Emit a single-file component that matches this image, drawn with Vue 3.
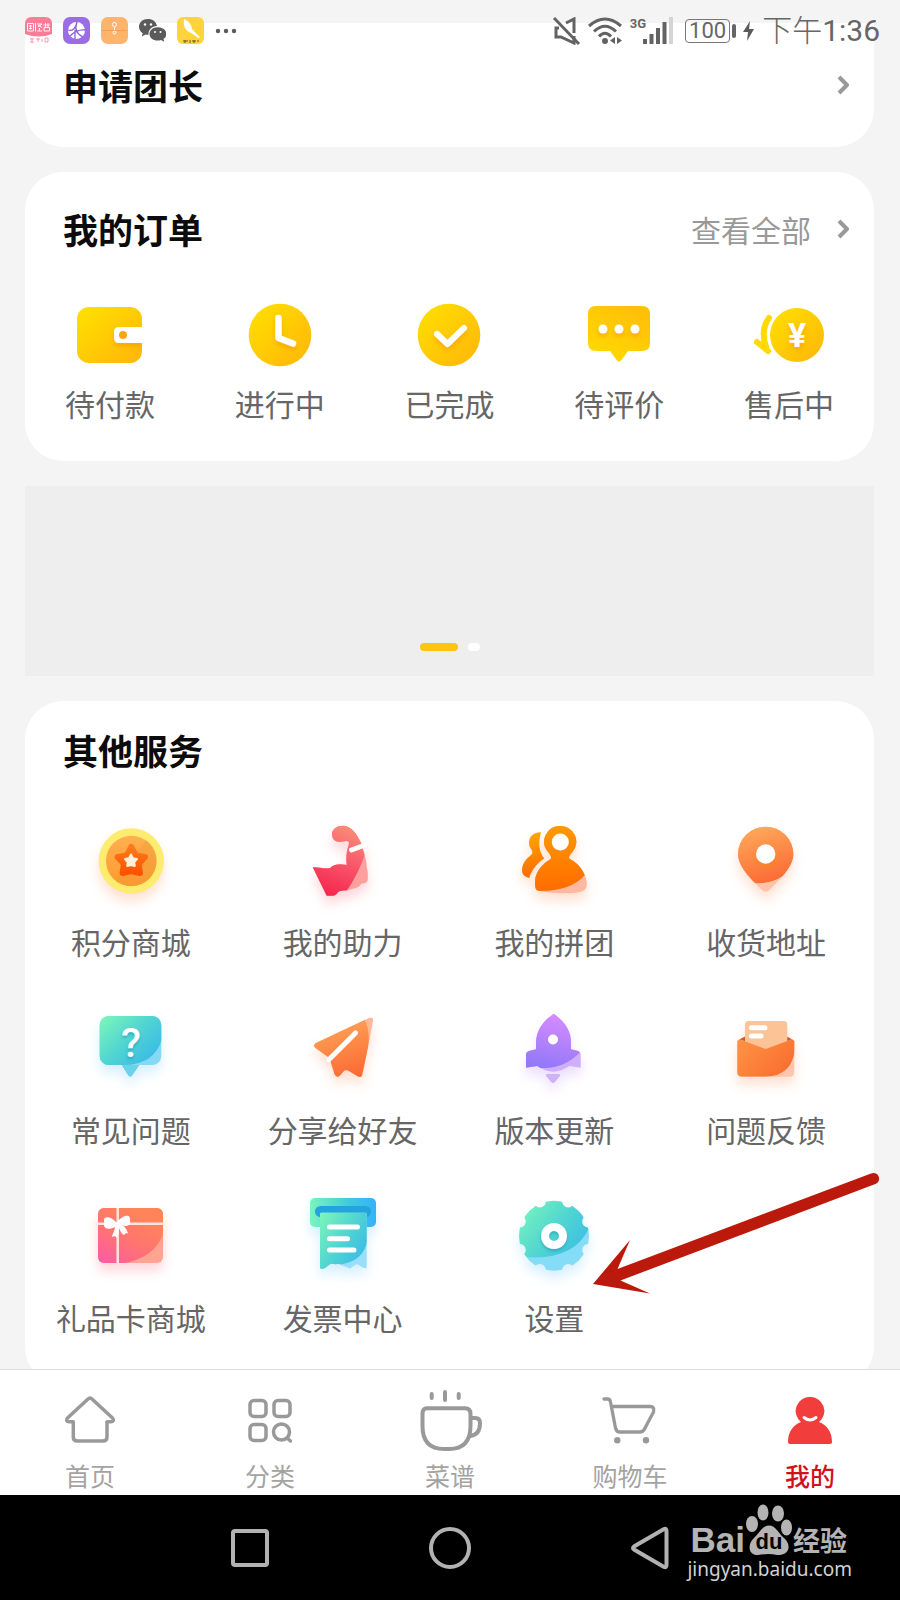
<script setup>
import { ref } from "vue"

const orders = [
  { icon: "wallet", label: "待付款" },
  { icon: "clock", label: "进行中" },
  { icon: "check", label: "已完成" },
  { icon: "comment", label: "待评价" },
  { icon: "refund", label: "售后中", glyph: "¥" },
]

const services = [
  { icon: "coin", label: "积分商城", tone: "peach" },
  { icon: "muscle", label: "我的助力", tone: "pink" },
  { icon: "group", label: "我的拼团", tone: "peach" },
  { icon: "pin", label: "收货地址", tone: "peach" },
  { icon: "question", label: "常见问题", tone: "sky", glyph: "?" },
  { icon: "plane", label: "分享给好友", tone: "peach" },
  { icon: "rocket", label: "版本更新", tone: "violet" },
  { icon: "feedback", label: "问题反馈", tone: "peach" },
  { icon: "gift", label: "礼品卡商城", tone: "pink" },
  { icon: "invoice", label: "发票中心", tone: "sky" },
  { icon: "gear", label: "设置", tone: "sky" },
]

const tabs = [
  { icon: "home", label: "首页" },
  { icon: "category", label: "分类" },
  { icon: "cup", label: "菜谱" },
  { icon: "cart", label: "购物车" },
  { icon: "me", label: "我的" },
]

const slides = ref([0, 1])
const activeSlide = ref(0)
const activeTab = ref("me")
</script>

<template>
  <div class="phone">
    <!-- icon sprite -->
    <svg class="sprite" width="0" height="0" aria-hidden="true">
      <defs>
        <linearGradient id="g-yellow" x1="0" y1="0" x2="1" y2="1">
          <stop offset="0.1" stop-color="#ffdd00" />
          <stop offset="1" stop-color="#ffb50a" />
        </linearGradient>
        <linearGradient id="g-bubble" x1="0" y1="1" x2="0.7" y2="0">
          <stop offset="0" stop-color="#ffdc00" />
          <stop offset="1" stop-color="#ffc008" />
        </linearGradient>
        <linearGradient id="g-coin" x1="0" y1="0" x2="0" y2="1">
          <stop offset="0" stop-color="#ffb050" />
          <stop offset="1" stop-color="#ff9a2e" />
        </linearGradient>
        <linearGradient id="g-star" x1="0" y1="0" x2="0" y2="1">
          <stop offset="0" stop-color="#ff7a1c" />
          <stop offset="1" stop-color="#ff5200" />
        </linearGradient>
        <linearGradient id="g-arm" x1="0.65" y1="0.15" x2="0.35" y2="0.85">
          <stop offset="0" stop-color="#fb9478" />
          <stop offset="0.5" stop-color="#f9566a" />
          <stop offset="1" stop-color="#f4264e" />
        </linearGradient>
        <linearGradient id="g-people" x1="0.4" y1="0" x2="0.5" y2="1">
          <stop offset="0" stop-color="#ffa600" />
          <stop offset="1" stop-color="#ff6a00" />
        </linearGradient>
        <linearGradient id="g-orange" x1="0.3" y1="0" x2="0.6" y2="1">
          <stop offset="0" stop-color="#ffa95c" />
          <stop offset="1" stop-color="#fb6a32" />
        </linearGradient>
        <linearGradient id="g-envelope" x1="0" y1="0" x2="1" y2="0.6">
          <stop offset="0" stop-color="#ff9544" />
          <stop offset="1" stop-color="#f96f30" />
        </linearGradient>
        <linearGradient id="g-mint" x1="0" y1="0" x2="1" y2="0.8">
          <stop offset="0" stop-color="#7ef8ba" />
          <stop offset="0.5" stop-color="#52d6d0" />
          <stop offset="1" stop-color="#36b8e8" />
        </linearGradient>
        <linearGradient id="g-slot" x1="0" y1="0" x2="1" y2="0">
          <stop offset="0" stop-color="#7af5bd" />
          <stop offset="0.6" stop-color="#3fc9de" />
          <stop offset="1" stop-color="#35b2fb" />
        </linearGradient>
        <linearGradient id="g-rocket" x1="0.6" y1="0" x2="0.4" y2="1">
          <stop offset="0" stop-color="#d98cff" />
          <stop offset="1" stop-color="#9078f8" />
        </linearGradient>
        <linearGradient id="g-gift" x1="0.1" y1="1" x2="0.7" y2="0.1">
          <stop offset="0" stop-color="#ff5ba4" />
          <stop offset="0.5" stop-color="#ff7470" />
          <stop offset="1" stop-color="#ff8558" />
        </linearGradient>
        <clipPath id="c-arm">
          <path d="M39 23C39 18 44 14.700 50 14.700C58 14.700 64 23 68 32C71 42 74 50 73.700 56C75 60 75 64 74.700 69C74 72 71 73 68.700 72.300C67 76 63 77 59 78C55 80 50 79 46.500 80.300C44 81 44 84.700 40 84.700H33.700L19.700 56.300C25 55.500 30 58 37 57C40 54 45 52 53.700 54C53 48 53.500 44 53.700 42C54 38 56 35 56 31.500C54 28.500 51 31 47 31C42 31 39 28 39 23Z" />
        </clipPath>
        <clipPath id="c-body">
          <path d="M56 15A15.700 15.700 0 0 0 44 41C46 43.500 48.500 46.500 46 48.500C38 53 31 61 31 71C31 76 31 80 36 80C44 82 70 84 79 80C83 78 84 73 81.500 66C78 56 72 51 66 48C63.500 46.500 66.500 43 68.500 41A15.700 15.700 0 0 0 56 15Z" />
        </clipPath>
        <clipPath id="c-pin">
          <path d="M49.700 15.700A27.700 27.700 0 0 0 22 43.500C22 53 30 64 46 79Q49.700 82 53.400 79C69 64 77.400 53 77.400 43.500A27.700 27.700 0 0 0 49.700 15.700Z" />
        </clipPath>
        <clipPath id="c-question">
          <path d="M28 17H71A9 9 0 0 1 80.300 26V57A9 9 0 0 1 71 66H58.300L51.500 76Q49.300 79 47 76L40.700 66H28A9 9 0 0 1 18.700 57V26A9 9 0 0 1 28 17Z" />
        </clipPath>
        <clipPath id="c-plane">
          <path d="M76 19Q80.500 17 80 22L69.800 75Q69 79 65 77.500L55 71.500Q52.500 70 50 73L47 76.500Q43.500 79.500 41.500 75L36.500 59L22.500 49Q19.500 46 23 44Z" />
        </clipPath>
        <clipPath id="c-rocket">
          <path d="M47.500 16.500Q49.700 13.500 52 16.500C62 24 67 33 67 44V50.300L74 52Q76.700 53 76.700 55V68.700L65.300 67Q57 72.700 49.300 72.700Q41 72.700 33.300 67L22 68.700V55Q22 53 25 52L32 50.300V44C32 33 38 23 47.500 16.500Z" />
        </clipPath>
        <clipPath id="c-envelope">
          <path d="M21.300 42L23.500 40.300L49.700 50L76 40.300L78.300 42V73Q78.300 77.700 73.500 77.700H26Q21.300 77.700 21.300 73Z" />
        </clipPath>
        <clipPath id="c-gift">
          <rect x="17" y="21" width="65" height="55" rx="6" />
        </clipPath>
        <clipPath id="c-paper">
          <path d="M27 27Q27 25.700 28.500 25.700H72.200Q73.700 25.700 73.700 27V81Q71 82 66 78Q64 76.500 62 78L57 81.500L48 78Q46 76.500 42 77.500C38 75.500 36 78 33 80.500Q29 83 27 81Z" />
        </clipPath>
        <mask id="m-gear">
          <circle cx="50" cy="48.700" r="35" fill="#fff" />
          <g fill="#000">
            <circle cx="64.200" cy="14.500" r="6" />
            <circle cx="84.200" cy="34.500" r="6" />
            <circle cx="84.200" cy="62.900" r="6" />
            <circle cx="64.200" cy="82.900" r="6" />
            <circle cx="35.800" cy="82.900" r="6" />
            <circle cx="15.800" cy="62.900" r="6" />
            <circle cx="15.800" cy="34.500" r="6" />
            <circle cx="35.800" cy="14.500" r="6" />
          </g>
        </mask>
        <filter id="f-soft" x="-40%" y="-40%" width="180%" height="200%">
          <feDropShadow dx="0" dy="3" stdDeviation="2.500" flood-color="#f08a00" flood-opacity="0.5" />
        </filter>
        <filter id="f-blue" x="-40%" y="-40%" width="180%" height="200%">
          <feDropShadow dx="0" dy="2" stdDeviation="1.500" flood-color="#0a8aa8" flood-opacity="0.5" />
        </filter>
      </defs>

      <symbol id="i-wallet" viewBox="0 0 80 80">
        <rect x="7" y="12" width="65" height="56" rx="12" fill="url(#g-yellow)" />
        <g filter="url(#f-soft)">
          <path d="M72 32H49Q44 32 44 37V43Q44 48 49 48H72Z" fill="#fff" />
        </g>
        <path d="M72 28H80V60H72Z" fill="#fff" />
        <circle cx="53" cy="40" r="4" fill="#faa51a" />
      </symbol>
      <symbol id="i-clock" viewBox="0 0 80 80">
        <circle cx="40" cy="40" r="31.300" fill="url(#g-yellow)" />
        <path d="M38.500 23V43L53 48.500" fill="none" stroke="#fff" stroke-width="6.500" stroke-linecap="round" stroke-linejoin="round" filter="url(#f-soft)" />
      </symbol>
      <symbol id="i-check" viewBox="0 0 80 80">
        <circle cx="40" cy="40" r="31.300" fill="url(#g-yellow)" />
        <path d="M28 39L38.500 49L55 33" fill="none" stroke="#fff" stroke-width="6" stroke-linecap="round" stroke-linejoin="round" filter="url(#f-soft)" />
      </symbol>
      <symbol id="i-comment" viewBox="0 0 80 80">
        <path d="M17 11H63Q71 11 71 19V48Q71 56 63 56H49L42.500 65Q40 68 37.500 65L31 56H17Q9 56 9 48V19Q9 11 17 11Z" fill="url(#g-bubble)" />
        <g fill="#fff" filter="url(#f-soft)">
          <circle cx="24" cy="34" r="4.500" />
          <circle cx="40" cy="34" r="4.500" />
          <circle cx="56" cy="34" r="4.500" />
        </g>
      </symbol>
      <symbol id="i-refund" viewBox="0 0 80 80">
        <circle cx="48" cy="40" r="27" fill="url(#g-yellow)" />
        <path d="M20 23C14 31 13 40 17 52M8 47L19 56" fill="none" stroke="#ffda00" stroke-width="6" stroke-linecap="round" />
      </symbol>

      <symbol id="i-coin" viewBox="0 0 100 100">
        <circle cx="50.300" cy="50" r="32.700" fill="#fdec70" />
        <circle cx="50.300" cy="50" r="25.300" fill="url(#g-coin)" />
        <path d="M65 29A25.300 25.300 0 0 1 35 70Z" fill="#e99a3a" opacity="0.350" />
        <path d="M50.300 36L54.800 44.500L64 46L57.500 53L59 62L50.300 60L41.600 62L43 53L36.600 46L45.800 44.500Z" fill="url(#g-star)" stroke="url(#g-star)" stroke-width="6" stroke-linejoin="round" />
        <path d="M50 43.500L52 47.200L56 48L53.200 51.200L53.800 55L50 54L46.200 55L46.800 51.200L44 48L48 47.200Z" fill="#fff0dc" stroke="#fff0dc" stroke-width="2" stroke-linejoin="round" />
      </symbol>
      <symbol id="i-muscle" viewBox="0 0 100 100">
        <g clip-path="url(#c-arm)">
          <rect width="100" height="100" fill="#ffa09c" />
          <path d="M0 0H100L74 36Q68 60 51 84L40 100H0Z" fill="url(#g-arm)" />
        </g>
        <path d="M58.500 39L72 34" stroke="#fff" stroke-width="5" stroke-linecap="round" />
      </symbol>
      <symbol id="i-group" viewBox="0 0 100 100">
        <path d="M37 21.300C28 21.300 25 27 25 32C25 38 30 39 28 43C25 46 18.300 50 18 59C18 64 21 66 25.300 67C27 60 33 52 40.300 47.500C35 41 34 32 37 21.300Z" fill="url(#g-people)" />
        <g clip-path="url(#c-body)">
          <rect width="100" height="100" fill="#ffb9a0" />
          <path d="M0 0H100V55L81 64Q67 80 36 80L0 82Z" fill="url(#g-people)" />
        </g>
        <circle cx="56.300" cy="31" r="8.500" fill="#fff" filter="url(#f-soft)" />
      </symbol>
      <symbol id="i-pin" viewBox="0 0 100 100">
        <g clip-path="url(#c-pin)">
          <rect width="100" height="100" fill="#ffc3aa" />
          <path d="M22 15H78V55Q62 74 38 72L22 70Z" fill="url(#g-orange)" />
        </g>
        <circle cx="49.700" cy="43" r="9.700" fill="#fff" filter="url(#f-soft)" />
      </symbol>
      <symbol id="i-question" viewBox="0 0 100 100">
        <g clip-path="url(#c-question)">
          <rect width="100" height="100" fill="#84daf6" />
          <path d="M18 17H81V40Q73 67 40 66H18Z" fill="url(#g-mint)" />
          <path d="M40 66H59L49 80Z" fill="#69d3ea" />
        </g>
      </symbol>
      <symbol id="i-plane" viewBox="0 0 100 100">
        <g clip-path="url(#c-plane)">
          <rect width="100" height="100" fill="#ffb898" />
          <path d="M20 18H70Q78 30 75 50L68 80H20Z" fill="url(#g-orange)" />
        </g>
        <path d="M36 60.500L62.500 34" stroke="#fff" stroke-width="5" stroke-linecap="round" />
      </symbol>
      <symbol id="i-rocket" viewBox="0 0 100 100">
        <g clip-path="url(#c-rocket)">
          <rect width="100" height="100" fill="#cfaefa" />
          <path d="M22 14H77V52Q62 69 40 69L22 70Z" fill="url(#g-rocket)" />
        </g>
        <path d="M43.500 75H54.500Q57 75 55.500 77.500L51 83Q49 85 47 83L42.500 77.500Q41 75 43.500 75Z" fill="#d0b0fa" />
        <circle cx="49" cy="40.500" r="5" fill="#fff" />
      </symbol>
      <symbol id="i-feedback" viewBox="0 0 100 100">
        <path d="M23 40.500L29 37.500V44ZM76.500 40.500L71 37.500V44Z" fill="#c9602c" />
        <path d="M33 22H67.500Q71.300 22 71.300 26V43L49.700 51L29 43V26Q29 22 33 22Z" fill="#fcc396" />
        <g clip-path="url(#c-envelope)">
          <rect width="100" height="100" fill="#ffc5ad" />
          <path d="M21 40H79V50Q76 77 50 77.700H21Z" fill="url(#g-envelope)" />
        </g>
        <path d="M35.500 28.700H49M35.500 37H45" stroke="#fff" stroke-width="5" stroke-linecap="round" />
      </symbol>
      <symbol id="i-gift" viewBox="0 0 100 100">
        <g clip-path="url(#c-gift)">
          <rect width="100" height="100" fill="#ffa491" />
          <path d="M17 21H83V44Q76 70 42 76.500H17Z" fill="url(#g-gift)" />
          <path d="M36.700 20V77M17 36.700H83" stroke="#ffe6e0" stroke-width="2.500" />
        </g>
        <path d="M36 36C30 29 23 29 23 33V38C23 42 28 43 34 40C34 44 31 47 31 50L34 49L36 51C38 47 38 43 37.500 40C39 44 41 47 43 48L45 46L47 46.500C46 42 43 39 41 38C45 40 49 39 49 35C50 29 47 28 44 29C41 30 38 32 36 36Z" fill="#fff" />
      </symbol>
      <symbol id="i-invoice" viewBox="0 0 100 100">
        <rect x="17" y="11" width="66" height="29" rx="5" fill="url(#g-slot)" />
        <rect x="22" y="19" width="56" height="11" rx="5.500" fill="#23a4dc" />
        <g clip-path="url(#c-paper)">
          <rect width="100" height="100" fill="#9adff9" />
          <path d="M27 25H74V55Q70 73 50 77Q45 78 40 77L27 84Z" fill="url(#g-mint)" />
        </g>
        <path d="M36.500 40H64.500M36.500 51.700H54.500M36.500 63H61" stroke="#fff" stroke-width="5" stroke-linecap="round" />
      </symbol>
      <symbol id="i-gear" viewBox="0 0 100 100">
        <g mask="url(#m-gear)">
          <rect x="15" y="13" width="70" height="72" fill="url(#g-mint)" />
          <path d="M20 70Q70 74 85 41V90H20Z" fill="#84dcf7" />
        </g>
        <circle cx="50" cy="49" r="9" fill="none" stroke="#fff" stroke-width="8" filter="url(#f-blue)" />
      </symbol>

      <symbol id="i-home" viewBox="0 0 64 64">
        <path d="M30 11Q32 9 34 11L54.500 30Q57 33.500 53 33.700H49V49Q49 53 45 53H19.500Q15.300 53 15.300 49V33.700H11Q7 33.500 9.500 30Z" fill="none" stroke="currentColor" stroke-width="3.500" stroke-linejoin="round" />
      </symbol>
      <symbol id="i-category" viewBox="0 0 64 64">
        <g fill="none" stroke="currentColor" stroke-width="3.500" stroke-linecap="round">
          <rect x="12" y="12.500" width="16" height="16" rx="4" />
          <rect x="36" y="12.500" width="16" height="16" rx="4" />
          <rect x="12" y="36.500" width="16" height="16" rx="4" />
          <circle cx="43.500" cy="44" r="8" />
          <path d="M49 50L52.500 53" />
        </g>
      </symbol>
      <symbol id="i-cup" viewBox="0 0 66 64">
        <g fill="none" stroke="currentColor" stroke-width="4" stroke-linecap="round">
          <path d="M10 20.300H48Q53.500 20.300 53.500 26V38Q53.500 61 32 61H27Q5.500 61 5.500 38V26Q5.500 20.300 10 20.300Z" />
          <path d="M54 30H58Q63 30 63 35Q63 47 53 48" />
          <path d="M14.700 6V10M28 4V12M41.700 6V10" />
        </g>
      </symbol>
      <symbol id="i-cart" viewBox="0 0 64 64">
        <path d="M6 11H9.500Q12 11 12.500 14L17.500 40Q18.500 44 22 44H42Q45 44 46.500 41L55.500 24Q57 18.500 52 18.500H13.500" fill="none" stroke="currentColor" stroke-width="3.300" stroke-linecap="round" stroke-linejoin="round" />
        <circle cx="19.300" cy="52.300" r="3.200" fill="currentColor" />
        <circle cx="48" cy="52.300" r="3.200" fill="currentColor" />
      </symbol>
      <symbol id="i-me" viewBox="0 0 64 64">
        <path d="M32 9A14 14 0 0 0 23 34C15 37 10 44 10 54Q10 56 12 56H52Q54 56 54 54C54 44 49 37 41 34A14 14 0 0 0 32 9Z" fill="#f23d3d" />
        <path d="M26 29.500Q32 34.500 38 29.500" fill="none" stroke="#fff" stroke-width="3" stroke-linecap="round" />
      </symbol>
      <symbol id="i-chevron" viewBox="0 0 12 20">
        <path d="M2 2L10 10L2 18" fill="none" stroke="currentColor" stroke-width="4" stroke-linejoin="round" />
      </symbol>
    </svg>

    <header class="status-bar">
      <div class="status-apps">
        <svg viewBox="0 0 27 27" width="27" height="27">
          <path d="M7 0H20Q27 0 27 7V17Q14 22 0 17V7Q0 0 7 0Z" fill="#fb7c97" />
          <path d="M2.500 6.500H8.500V14H2.500ZM4 9H7M4 11.500H7M5.500 8V12.500M10.500 6V14.500M12 7H17L13 10M13 8L17 10.500M12 14H17M14.500 11V14M18.500 8H25M20.500 6V10M23 6V10M19 10.500H24.500V14H19Z" stroke="#fff" stroke-width="0.900" fill="none" />
          <path d="M5 22H9M5 25H9M7 21V26M11 22H15M13 21V25M17 22V25M20 21H23V25H20Z" stroke="#fb9aae" fill="none" />
        </svg>
        <svg viewBox="0 0 27 27" width="27" height="27">
          <rect width="27" height="27" rx="7" fill="#9a6de4" />
          <circle cx="13.500" cy="13.500" r="8.500" fill="#fff" />
          <path d="M5 13Q12 15 14 5M14 5Q10 15 20 20M7 19Q14 12 22 13M12 13V22" fill="none" stroke="#8a5fd6" stroke-width="1.300" />
        </svg>
        <svg viewBox="0 0 27 27" width="27" height="27">
          <rect width="27" height="27" rx="7" fill="#feb469" />
          <path d="M1 13.500H26" stroke="#f3a04f" />
          <circle cx="13.500" cy="7.500" r="2" fill="none" stroke="#fff" />
          <circle cx="13.500" cy="15.500" r="1.500" fill="none" stroke="#fff" />
          <path d="M13.500 10V13" stroke="#fff" />
        </svg>
        <svg viewBox="0 0 27 27" width="27" height="27">
          <path d="M9 2C3.500 2 0 5.500 0 9.800C0 12.500 1.500 14.700 3.700 16.200L2.800 19.500L6.500 17.500Q8 18 9.500 17.800C9 13 13 9 18 9C17 4.500 13.500 2 9 2Z" fill="#5b5b5b" />
          <path d="M18.500 10.200C14 10.200 10.500 13 10.500 17C10.500 20.800 14 23.600 18.500 23.600Q20.500 23.600 22 23L25.300 24.800L24.500 22C26.500 20.500 27.500 19 27.500 17C27.500 13 23.500 10.200 18.500 10.200Z" fill="#5b5b5b" />
          <g fill="#fff">
            <circle cx="6" cy="7.500" r="1.200" />
            <circle cx="12" cy="7.500" r="1.200" />
            <circle cx="16" cy="15" r="1" />
            <circle cx="21.500" cy="15" r="1" />
          </g>
        </svg>
        <svg viewBox="0 0 27 27" width="27" height="27">
          <rect width="27" height="27" rx="6" fill="#ffd43a" />
          <path d="M7 2Q14 5 15 12L23 20.500L21.500 21L14 16Q5 12 7 2Z" fill="#fff" />
          <path d="M6 24H11M8 23V26M13 23V26M15 24H19M17 23V26M20 24H22" stroke="#6a5a20" />
        </svg>
        <svg viewBox="0 0 22 6" width="22" height="6" fill="#5b5b5b">
          <circle cx="3" cy="3" r="2.200" />
          <circle cx="11" cy="3" r="2.200" />
          <circle cx="19" cy="3" r="2.200" />
        </svg>
      </div>
      <div class="status-info">
        <svg viewBox="0 0 27 28" width="27" height="28" fill="none" stroke="#636363" stroke-width="3">
          <path d="M1 1L26 27" />
          <path d="M6 11H3V20H8L21 26V19M13 6L21 2V16" />
        </svg>
        <svg viewBox="0 0 34 28" width="34" height="28" fill="none" stroke="#636363" stroke-width="3">
          <path d="M1 9Q17 -5 33 9M6 14.500Q17 4 28 14.500M11 19.500Q17 13 23 19.500" />
          <circle cx="17" cy="24" r="3" fill="#636363" stroke="none" />
          <path d="M27 20V27L22 23.500ZM29 20V27L34 23.500Z" fill="#636363" stroke="none" />
        </svg>
        <div class="signal">
          <span class="network">3G</span>
          <svg viewBox="0 0 30 28" width="30" height="28" stroke="#636363" stroke-width="4">
            <path d="M2 22V27M8.500 17V27M15 11V27M21.500 5V27" />
            <path d="M28 0V27" stroke="#d4d4d4" />
          </svg>
        </div>
        <div class="battery">
          <span class="battery-level">100</span>
          <i class="battery-tip"></i>
          <svg viewBox="0 0 11 20" width="11" height="20">
            <path d="M7 0L0 11H5L4 20L11 8H6Z" fill="#5b5b5b" />
          </svg>
        </div>
        <time class="time"><span class="period">下午</span>1:36</time>
      </div>
    </header>

    <main class="content">
      <section class="card card-leader">
        <a class="card-head" href="#leader">
          <h2>申请团长</h2>
          <svg class="chevron" width="12" height="20"><use href="#i-chevron" /></svg>
        </a>
      </section>

      <section class="card card-orders">
        <div class="card-head">
          <h2>我的订单</h2>
          <a class="view-all" href="#orders">
            查看全部
            <svg class="chevron" width="12" height="20"><use href="#i-chevron" /></svg>
          </a>
        </div>
        <nav class="order-list">
          <a v-for="item in orders" :key="item.icon" class="entry" :href="`#${item.icon}`">
            <div class="icon">
              <svg width="80" height="80"><use :href="`#i-${item.icon}`" /></svg>
              <b v-if="item.glyph" class="glyph yuan">{{ item.glyph }}</b>
            </div>
            <span>{{ item.label }}</span>
          </a>
        </nav>
      </section>

      <section class="banner">
        <button
          v-for="slide in slides"
          :key="slide"
          type="button"
          class="dot"
          :class="{ active: slide === activeSlide }"
          :aria-label="`${slide + 1}`"
          @click="activeSlide = slide"
        ></button>
      </section>

      <section class="card card-services">
        <div class="card-head">
          <h2>其他服务</h2>
        </div>
        <nav class="service-grid">
          <a v-for="item in services" :key="item.icon" class="entry" :href="`#${item.icon}`">
            <div class="icon">
              <svg width="100" height="100" :class="item.tone"><use :href="`#i-${item.icon}`" /></svg>
              <b v-if="item.glyph" class="glyph help">{{ item.glyph }}</b>
            </div>
            <span>{{ item.label }}</span>
          </a>
        </nav>
        <svg class="pointer" viewBox="0 0 288 124" width="288" height="124" fill="#bb190c">
          <path d="M1 112L38 68L25.500 97L279 1.600A5.500 5.500 0 0 1 284 11.700L28.500 108.500L58 121.500Z" />
        </svg>
      </section>
    </main>

    <nav class="tab-bar">
      <a
        v-for="tab in tabs"
        :key="tab.icon"
        class="tab"
        :class="{ active: tab.icon === activeTab }"
        :href="`#${tab.icon}`"
        @click="activeTab = tab.icon"
      >
        <svg width="66" height="64"><use :href="`#i-${tab.icon}`" /></svg>
        <span>{{ tab.label }}</span>
      </a>
    </nav>

    <footer class="system-nav">
      <button type="button" aria-label="最近">
        <svg viewBox="0 0 44 44" width="44" height="44"><rect x="5" y="5" width="34" height="34" rx="2" /></svg>
      </button>
      <button type="button" aria-label="主页">
        <svg viewBox="0 0 44 44" width="44" height="44"><circle cx="22" cy="22" r="19" /></svg>
      </button>
      <button type="button" aria-label="返回">
        <svg viewBox="0 0 44 44" width="44" height="44"><path d="M36 3Q38.500 2 38.500 5V39Q38.500 42 36 41L6 23.500Q4 22 6 20.500Z" /></svg>
      </button>
      <div class="watermark">
        <div class="brand">
          <span class="brand-latin">Bai</span>
          <div class="paw">
            <svg viewBox="0 0 48 52" width="48" height="52" fill="#b4b4b4">
              <ellipse cx="7" cy="20" rx="6" ry="8" />
              <ellipse cx="18" cy="8.500" rx="5.500" ry="8" />
              <ellipse cx="33" cy="9.500" rx="6" ry="8" />
              <ellipse cx="41.500" cy="23.500" rx="5.500" ry="8" />
              <path d="M24 21.500C17 21.500 15 29 9 34C3 39 2 51 13 51Q24 49 32 51C46 51 46 40 39 34C33 29 31 21.500 24 21.500Z" />
            </svg>
            <span class="paw-text">du</span>
          </div>
          <span class="brand-cn">经验</span>
        </div>
        <span class="brand-url">jingyan.baidu.com</span>
      </div>
    </footer>
  </div>
</template>

<style>
body {
  margin: 0;
  background: #f4f4f4;
}
</style>

<style scoped>
.phone {
  position: relative;
  display: flex;
  flex-direction: column;
  height: 100vh;
  overflow: hidden;
  background: #f4f4f4;
  font-family: "Noto Sans CJK SC", sans-serif;
  color: #666;
}

.phone a {
  color: inherit;
  text-decoration: none;
}

.sprite {
  position: absolute;
}

svg {
  display: block;
  flex: none;
}

/* Status bar, floats over the scrolled content */
.status-bar {
  position: absolute;
  top: 0;
  left: 0;
  right: 0;
  z-index: 2;
  display: flex;
  justify-content: space-between;
  align-items: center;
  height: 61px;
  padding: 0 20px 0 25px;
  box-sizing: border-box;
}

.status-apps {
  display: flex;
  align-items: center;
  gap: 11px;
}

.status-info {
  display: flex;
  align-items: center;
  gap: 8px;
}

.signal {
  display: flex;
  align-items: flex-start;
}

.network {
  margin-right: -3px;
  font: 700 13px/14px Roboto, sans-serif;
}

.battery {
  display: flex;
  align-items: center;
  gap: 2px;
  margin-left: 4px;
}

.battery-level {
  padding: 0 3px;
  border: 1px solid #777;
  border-radius: 4px;
  font: 400 22px/22px Roboto, sans-serif;
}

.battery-tip {
  width: 4px;
  height: 14px;
  margin-right: 5px;
  border-radius: 2px;
  background: #666;
}

.time {
  font: 400 30px/40px Roboto, "Noto Sans CJK SC", sans-serif;
  white-space: nowrap;
}

.period {
  font-weight: 300;
}

/* Scrolled page */
.content {
  flex: 1;
  min-height: 0;
  display: flex;
  flex-direction: column;
  gap: 25px;
  padding: 23px 26px 0 25px;
  overflow: hidden;
}

.card {
  position: relative;
  flex: none;
  border-radius: 38px;
  background: #fff;
}

.card-head {
  display: flex;
  justify-content: space-between;
  align-items: center;
  height: 50px;
  padding: 0 25px 0 38px;
}

.card-head h2 {
  margin: 0;
  font-size: 35px;
  line-height: 50px;
  font-weight: 700;
  color: #0c0c0c;
}

.chevron {
  color: #999;
}

.card-leader {
  padding: 37px 0;
  border-radius: 0 0 38px 38px;
}

.card-orders {
  padding: 32px 0 38px;
}

.view-all {
  display: flex;
  align-items: center;
  gap: 26px;
  font-size: 30px;
  line-height: 40px;
}

.card-head .view-all {
  color: #999;
}

.order-list {
  display: grid;
  grid-template-columns: repeat(5, 1fr);
  margin-top: 41px;
}

.entry {
  display: flex;
  flex-direction: column;
  align-items: center;
  gap: 8px;
  font-size: 30px;
  line-height: 40px;
  white-space: nowrap;
}

.icon {
  position: relative;
}

.glyph {
  position: absolute;
  top: 50%;
  left: 0;
  right: 0;
  text-align: center;
  font-family: Roboto, sans-serif;
  color: #fff;
}

.yuan {
  margin-top: -20px;
  padding-left: 16px;
  font-size: 34px;
  text-shadow: 0 3px 5px rgba(240, 138, 0, 0.5);
}

.help {
  margin-top: -26px;
  font-size: 41px;
  font-weight: 500;
  text-shadow: 0 2px 3px rgba(10, 138, 168, 0.5);
}

.banner {
  flex: none;
  display: flex;
  justify-content: center;
  align-items: flex-end;
  gap: 10px;
  height: 165px;
  padding-bottom: 25px;
  background: #eee;
}

.dot {
  width: 12px;
  height: 8px;
  padding: 0;
  border: 0;
  border-radius: 4px;
  background: #fff;
}

.dot.active {
  width: 38px;
  background: #fdc50c;
}

.card-services {
  padding: 24px 0 48px;
}

.service-grid {
  display: grid;
  grid-template-columns: repeat(4, 1fr);
  row-gap: 38px;
  margin-top: 36px;
  padding-right: 2px;
}

.service-grid .entry {
  gap: 10px;
}

.peach {
  filter: drop-shadow(0 8px 6px rgba(255, 120, 50, 0.22));
}

.pink {
  filter: drop-shadow(0 8px 6px rgba(255, 70, 90, 0.22));
}

.sky {
  filter: drop-shadow(0 8px 6px rgba(60, 180, 250, 0.2));
}

.violet {
  filter: drop-shadow(0 8px 6px rgba(160, 90, 250, 0.2));
}

.pointer {
  position: absolute;
  top: 471px;
  right: -6px;
}

/* Bottom tabs */
.tab-bar {
  flex: none;
  display: grid;
  grid-template-columns: repeat(5, 1fr);
  padding: 18px 0 2px;
  border-top: 1px solid #ddd;
  background: #fff;
}

.tab {
  display: flex;
  flex-direction: column;
  align-items: center;
  gap: 5px;
  font-size: 25px;
  line-height: 36px;
  font-weight: 400;
}

.tab svg {
  color: #999;
}

.tab span {
  color: #a5a3a1;
}

.tab.active span {
  font-weight: 500;
  color: #d0121b;
}

.system-nav {
  position: relative;
  flex: none;
  display: flex;
  justify-content: center;
  align-items: center;
  gap: 156px;
  height: 105px;
  background: #000;
}

.system-nav button {
  padding: 0;
  border: 0;
  background: none;
}

.system-nav button svg {
  fill: none;
  stroke: #b2b2b2;
  stroke-width: 4;
}

.watermark {
  position: absolute;
  top: 9px;
  right: 48px;
  color: #b4b4b4;
}

.brand {
  display: flex;
  align-items: flex-end;
  padding-left: 3px;
}

.brand-latin {
  font: 700 35px/32px "Liberation Sans", sans-serif;
}

.paw {
  position: relative;
}

.paw-text {
  position: absolute;
  left: 0;
  right: 0;
  bottom: 2px;
  text-align: center;
  font: 700 22px/24px "Liberation Sans", sans-serif;
  color: #000;
}

.brand-cn {
  font-size: 27px;
  line-height: 32px;
  font-weight: 700;
}

.brand-url {
  display: block;
  font: 400 19px/26px "Noto Sans", sans-serif;
  color: #d2d2d2;
}
</style>
